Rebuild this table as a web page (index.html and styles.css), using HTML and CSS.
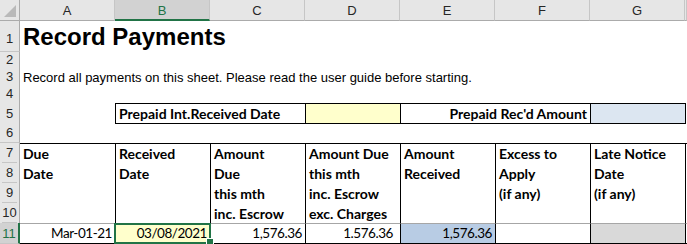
FILE: index.html
```html
<!DOCTYPE html>
<html lang="en">
<head>
    <meta charset="UTF-8">
    <title>Record Payments</title>
    <link rel="stylesheet" href="styles.css">
</head>
<body>
    <div class="sheet">
        <div class="row head-row">
            <div class="corner"></div>
            <div class="col-head">A</div>
            <div class="col-head active">B</div>
            <div class="col-head">C</div>
            <div class="col-head">D</div>
            <div class="col-head">E</div>
            <div class="col-head">F</div>
            <div class="col-head">G</div>
            <div class="col-head"></div>
        </div>

        <div class="row r1">
            <div class="row-head">1</div>
            <div class="cell title">Record Payments</div>
        </div>
        <div class="row r-small">
            <div class="row-head">2</div>
        </div>
        <div class="row r-small">
            <div class="row-head">3</div>
            <div class="cell note">Record all payments on this sheet. Please read the user guide before starting.</div>
        </div>
        <div class="row r-small">
            <div class="row-head">4</div>
        </div>

        <div class="row r-std">
            <div class="row-head">5</div>
            <div class="cell"></div>
            <div class="cell box label span-2">Prepaid Int.Received Date</div>
            <div class="cell box yellow"></div>
            <div class="cell box label span-2 right">Prepaid Rec'd Amount</div>
            <div class="cell box pale-blue"></div>
            <div class="cell edge"></div>
        </div>
        <div class="row r-std">
            <div class="row-head">6</div>
        </div>

        <div class="row r-block">
            <div class="row-head stack">
                <span>7</span><span>8</span><span>9</span><span>10</span>
            </div>
            <div class="cell th first">Due<br>Date</div>
            <div class="cell th">Received<br>Date</div>
            <div class="cell th">Amount<br>Due<br>this mth<br>inc. Escrow</div>
            <div class="cell th">Amount Due<br>this mth<br>inc. Escrow<br>exc. Charges</div>
            <div class="cell th">Amount<br>Received</div>
            <div class="cell th">Excess to<br>Apply<br>(if any)</div>
            <div class="cell th">Late Notice<br>Date<br>(if any)</div>
            <div class="cell edge"></div>
        </div>

        <div class="row r11">
            <div class="row-head active">11</div>
            <div class="cell td first">Mar-01-21</div>
            <div class="cell td yellow selected">03/08/2021</div>
            <div class="cell td">1,576.36</div>
            <div class="cell td pad-wide">1.576.36</div>
            <div class="cell td blue">1,576.36</div>
            <div class="cell td"></div>
            <div class="cell td grey"></div>
            <div class="cell edge"></div>
        </div>
    </div>
</body>
</html>
```

FILE: styles.css
```css
body {
    margin: 0;
    background-color: white;
    font-family: "Liberation Sans", Arial, sans-serif;
    color: black;
}

* {
    box-sizing: border-box;
}

.sheet {
    width: 687px;
    height: 244px;
    overflow: hidden;
}

.row {
    display: grid;
    grid-template-columns: 20px repeat(7, 95px) 1fr;
}

.head-row { height: 21px; }
.r1 { height: 31px; }
.r-small { height: 17px; }
.r-std { height: 20px; }
.r-block { height: 80px; }
.r11 { height: 21px; }

/* column and row headers */
.corner {
    background-color: #e6e6e6;
    border-right: 1px solid #ababab;
    border-bottom: 1px solid #ababab;
    position: relative;
}

.corner::after {
    content: "";
    position: absolute;
    right: 3px;
    bottom: 3px;
    border-left: 12px solid transparent;
    border-bottom: 12px solid #b9b9b9;
}

.col-head {
    background-color: #e6e6e6;
    border-right: 1px solid #c6c6c6;
    border-bottom: 1px solid #ababab;
    font-size: 13px;
    color: #262626;
    display: flex;
    align-items: center;
    justify-content: center;
    padding-top: 1px;
}

.col-head.active {
    background-color: #d2d2d2;
    color: #217346;
    border-bottom: 2px solid #217346;
    padding-top: 2px;
}

.row-head {
    background-color: #e6e6e6;
    border-right: 1px solid #ababab;
    border-bottom: 1px solid #c6c6c6;
    font-size: 13px;
    color: #262626;
    display: flex;
    align-items: flex-end;
    justify-content: center;
    padding-bottom: 2px;
    line-height: 15px;
}

.r1 .row-head {
    padding-bottom: 5px;
}

.row-head.stack {
    display: grid;
    grid-template-rows: repeat(4, 20px);
    padding: 0;
    border-bottom: none;
}

.row-head.stack span {
    display: flex;
    align-items: flex-end;
    justify-content: center;
    padding-bottom: 2px;
    border-bottom: 1px solid #c6c6c6;
}

.row-head.active {
    background-color: #d2d2d2;
    color: #217346;
    border-right: 2px solid #217346;
}

/* cells */
.cell {
    font-family: Lato, "Liberation Sans", sans-serif;
    font-size: 14px;
    white-space: nowrap;
    padding: 0 3px;
}

.title {
    grid-column: 2 / -1;
    font-family: "Liberation Sans", Arial, sans-serif;
    font-weight: bold;
    font-size: 24px;
    line-height: 28px;
    display: flex;
    align-items: flex-end;
    padding-left: 3px;
    padding-bottom: 1px;
}

.note {
    grid-column: 2 / -1;
    font-family: "Liberation Sans", Arial, sans-serif;
    font-size: 13px;
    line-height: 17px;
    padding-left: 3px;
}

.span-2 {
    grid-column: span 2;
}

.box {
    border-top: 1px solid black;
    border-bottom: 1px solid black;
    border-left: 1px solid black;
}

.label {
    font-weight: bold;
    line-height: 19px;
}

.right {
    text-align: right;
}

.edge {
    border-left: 1px solid black;
    padding: 0;
}

.yellow {
    background-color: #ffffcc;
}

.pale-blue {
    background-color: #dce6f1;
}

.blue {
    background-color: #b8cce4;
}

.grey {
    background-color: #d9d9d9;
}

.th {
    font-weight: bold;
    line-height: 20px;
    border-top: 1px solid black;
    border-left: 1px solid black;
}

.td {
    text-align: right;
    font-size: 13.5px;
    letter-spacing: -0.45px;
    line-height: 19px;
    padding-right: 3px;
    border-top: 1px solid #a6a6a6;
    border-left: 1px solid black;
    border-bottom: 1px solid black;
}

.th.first,
.td.first {
    border-left: none;
}

.r-block .edge {
    border-top: 1px solid black;
}

.r11 .edge {
    border-top: 1px solid #a6a6a6;
    border-bottom: 1px solid black;
}

.td.pad-wide {
    padding-right: 7px;
}

.selected {
    position: relative;
}

.selected::after {
    content: "";
    position: absolute;
    top: -1px;
    left: -2px;
    right: -1px;
    bottom: -1px;
    border: 2px solid #217346;
}

.selected::before {
    content: "";
    position: absolute;
    right: -4px;
    bottom: -3px;
    width: 6px;
    height: 6px;
    background-color: #217346;
    border: 1px solid white;
    z-index: 1;
}
```
